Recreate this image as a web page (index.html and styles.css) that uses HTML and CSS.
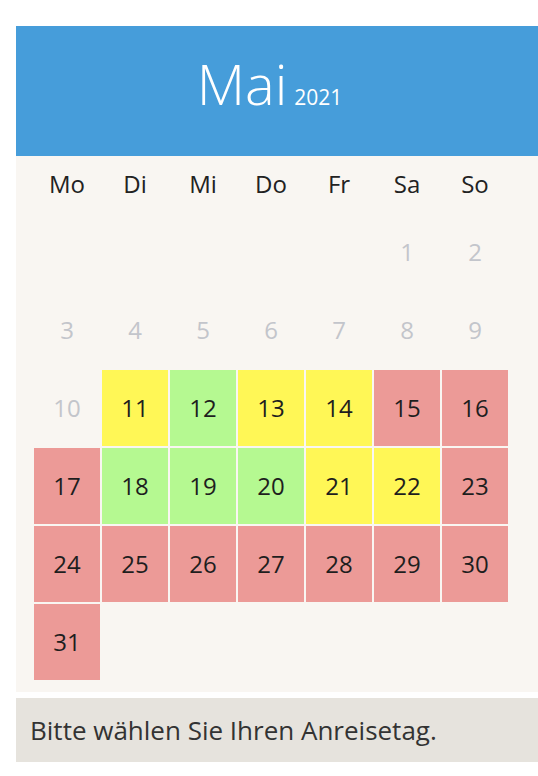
FILE: index.html
```html
<!DOCTYPE html>
<html lang="de">
<head>
<meta charset="utf-8">
<title>Kalender Mai 2021</title>
<link rel="stylesheet" href="styles.css">
</head>
<body>
<div class="calendar">
  <div class="cal-header">
    <span class="month">Mai</span><span class="year">2021</span>
  </div>
  <div class="cal-body">
    <div class="grid">
      <div class="wd">Mo</div><div class="wd">Di</div><div class="wd">Mi</div><div class="wd">Do</div><div class="wd">Fr</div><div class="wd">Sa</div><div class="wd">So</div>

      <div class="day empty"></div><div class="day empty"></div><div class="day empty"></div><div class="day empty"></div><div class="day empty"></div>
      <div class="day past">1</div><div class="day past">2</div>

      <div class="day past">3</div><div class="day past">4</div><div class="day past">5</div><div class="day past">6</div><div class="day past">7</div><div class="day past">8</div><div class="day past">9</div>

      <div class="day past">10</div><div class="day yellow">11</div><div class="day green">12</div><div class="day yellow">13</div><div class="day yellow">14</div><div class="day red">15</div><div class="day red">16</div>

      <div class="day red">17</div><div class="day green">18</div><div class="day green">19</div><div class="day green">20</div><div class="day yellow">21</div><div class="day yellow">22</div><div class="day red">23</div>

      <div class="day red">24</div><div class="day red">25</div><div class="day red">26</div><div class="day red">27</div><div class="day red">28</div><div class="day red">29</div><div class="day red">30</div>

      <div class="day red">31</div>
    </div>
  </div>
  <div class="cal-footer">Bitte wählen Sie Ihren Anreisetag.</div>
</div>
</body>
</html>
```
FILE: styles.css
```css
html, body {
  margin: 0;
  padding: 0;
  background: #ffffff;
}
body {
  font-family: "Open Sans", "DejaVu Sans", sans-serif;
  overflow: hidden;
}
.calendar {
  margin: 26px 0 0 16px;
}
.cal-header {
  box-sizing: border-box;
  height: 130px;
  padding: 29px 15px 0 0;
  background: #469dda;
  color: #ffffff;
  display: flex;
  justify-content: center;
  align-items: baseline;
}
.month {
  font-size: 56px;
  font-weight: 300;
  line-height: 56px;
}
.year {
  font-size: 21px;
  font-weight: 400;
  margin-left: 7px;
  line-height: 56px;
}
.cal-body {
  background: #f9f6f2;
  padding: 0 0 12px 18px;
}
.grid {
  display: grid;
  grid-template-columns: repeat(7, 66px);
  grid-auto-rows: 76px;
  grid-template-rows: 56px;
  gap: 2px;
}
.wd {
  display: flex;
  align-items: center;
  justify-content: center;
  box-sizing: border-box;
  padding-bottom: 2px;
  font-size: 24px;
  color: #222222;
}
.day {
  display: flex;
  align-items: center;
  justify-content: center;
  box-sizing: border-box;
  padding-bottom: 2px;
  font-size: 24px;
  color: #1e1e1e;
}
.day.past {
  color: #c3c5cb;
}
.day.yellow { background: #fff756; }
.day.green { background: #b5f991; }
.day.red { background: #ec9a97; }
.cal-footer {
  margin-top: 6px;
  box-sizing: border-box;
  height: 64px;
  padding-left: 14px;
  background: #e6e3dd;
  color: #333333;
  font-size: 26px;
  display: flex;
  align-items: center;
}
```
